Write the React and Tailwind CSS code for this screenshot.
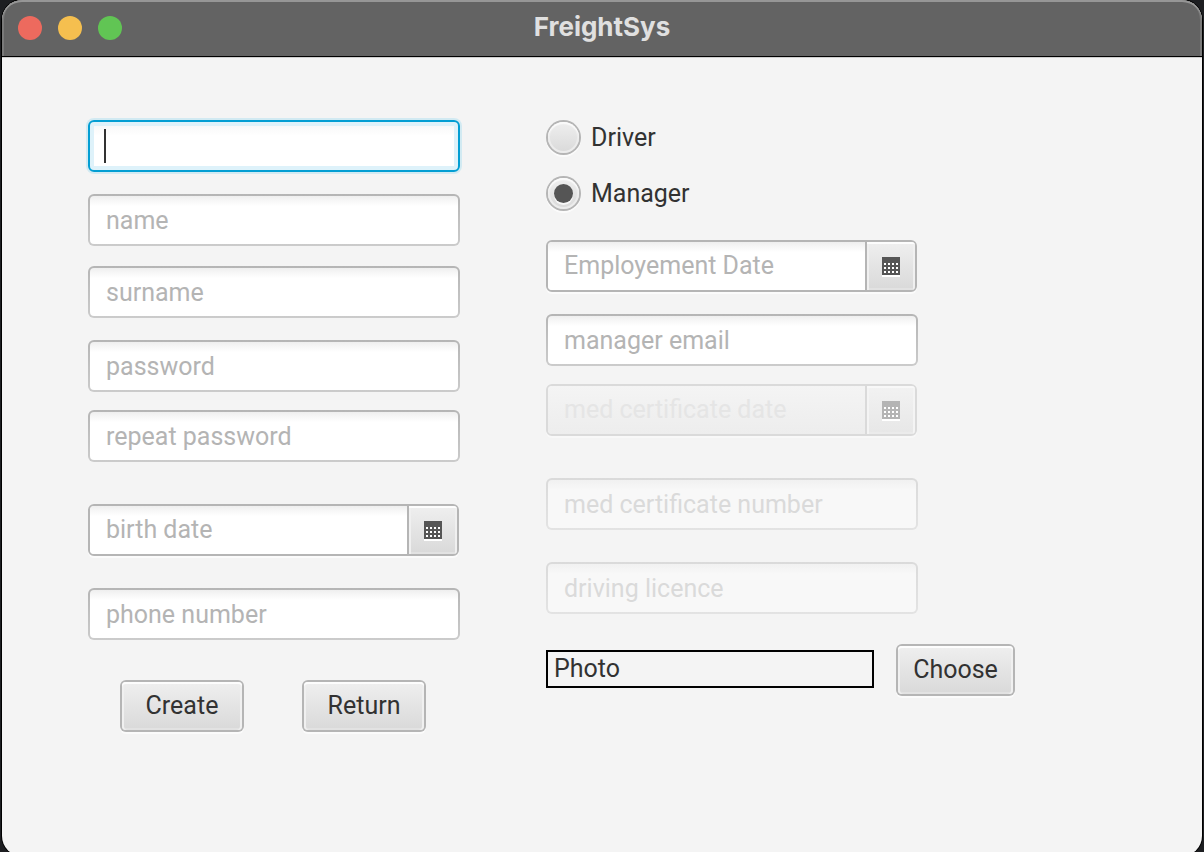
import React from "react";

const raised =
  "border-2 border-transparent rounded-[6px] text-[25px] leading-8 text-[#323232] [background:linear-gradient(#efefef,#d9d9d9)_padding-box,linear-gradient(#b5b5b5,#b5b5b5)_border-box] shadow-[inset_0_2px_0_#fdfdfd,inset_2px_0_0_#f0f0f0,inset_-2px_0_0_#f0f0f0,inset_0_-2px_0_#e2e2e2,0_2px_0_#fbfbfb]";

const field =
  "block h-[52px] w-full rounded-[6px] border-2 border-transparent px-4 text-[25px] text-[#323232] placeholder:text-[#b4b4b4] placeholder:opacity-100 outline-none [background:linear-gradient(#efefef,#ffffff_10px)_padding-box,linear-gradient(#b5b5b5,#cbcbcb)_border-box] disabled:placeholder:text-[#dadada] disabled:[background:linear-gradient(#f1f1f1,#f8f8f8_10px)_padding-box,linear-gradient(#dadada,#e3e3e3)_border-box]";

function TextField({ label, type = "text", disabled }) {
  return (
    <input
      type={type}
      aria-label={label}
      placeholder={label}
      disabled={disabled}
      className={field}
    />
  );
}

function LoginField() {
  return (
    <div className="relative">
      <input
        type="text"
        aria-label="login"
        className="block h-[52px] w-full rounded-[6px] border-2 border-[#039ed3] bg-[linear-gradient(#f6f6f6,#ffffff_14px)] px-4 text-[25px] text-[#323232] caret-transparent shadow-[inset_0_0_0_4px_#def2fa,0_0_0_2px_#d2eaf2] outline-none"
      />
      <span aria-hidden="true" className="pointer-events-none absolute top-[9px] left-4 h-[34px] w-[2px] bg-[#323232]" />
    </div>
  );
}

function CalendarIcon() {
  return (
    <svg width="18" height="20" viewBox="0 0 18 20" shapeRendering="crispEdges" aria-hidden="true" className="mt-[2px]">
      <path fill="#fff" d="M0 2h18v18H0z" />
      <path fill="currentColor" d="M0 0h18v18H0z" />
      <path
        fill="#fff"
        d="M2 6h2v2H2zM6 6h2v2H6zM10 6h2v2h-2zM14 6h2v2h-2zM2 10h2v2H2zM6 10h2v2H6zM10 10h2v2h-2zM14 10h2v2h-2zM2 14h2v2H2zM6 14h2v2H6zM10 14h2v2h-2zM14 14h2v2h-2z"
      />
    </svg>
  );
}

function DateField({ label, disabled }) {
  return (
    <div
      className={
        disabled
          ? "mr-px flex h-[52px] overflow-hidden rounded-[6px] border-2 border-[#dadada] shadow-[0_2px_0_#f8f8f8]"
          : "mr-px flex h-[52px] overflow-hidden rounded-[6px] border-2 border-[#b5b5b5] shadow-[0_2px_0_#fbfbfb]"
      }
    >
      <input
        type="text"
        aria-label={label}
        placeholder={label}
        disabled={disabled}
        className="min-w-0 flex-1 bg-[linear-gradient(#efefef,#ffffff_10px)] px-4 pb-px text-[25px] text-[#323232] outline-none placeholder:text-[#b4b4b4] placeholder:opacity-100 disabled:bg-[linear-gradient(#f4f4f4,#ededed)] disabled:placeholder:text-[#e5e5e5]"
      />
      <button
        type="button"
        aria-label={`Open calendar for ${label}`}
        disabled={disabled}
        className="flex w-[50px] items-center justify-center border-l-2 border-[#b5b5b5] bg-[linear-gradient(#efefef,#d9d9d9)] text-[#555555] shadow-[inset_0_2px_0_#fdfdfd,inset_2px_0_0_#f0f0f0,inset_-2px_0_0_#f0f0f0,inset_0_-2px_0_#e2e2e2] disabled:border-[#dadada] disabled:bg-[linear-gradient(#f2f2f2,#e7e7e7)] disabled:text-[#b4b4b4] disabled:shadow-[inset_0_2px_0_#f8f8f8,inset_2px_0_0_#f4f4f4,inset_-2px_0_0_#f4f4f4,inset_0_-2px_0_#ebebeb]"
      >
        <CalendarIcon />
      </button>
    </div>
  );
}

function Role({ label, defaultChecked }) {
  return (
    <label className="flex h-[35px] items-center gap-[10px] text-[25px] leading-8 text-[#323232]">
      <input
        type="radio"
        name="role"
        defaultChecked={defaultChecked}
        className="grid size-[35px] shrink-0 appearance-none place-content-center rounded-full border-2 border-transparent [background:linear-gradient(#efefef,#d9d9d9)_padding-box,linear-gradient(#b5b5b5,#b5b5b5)_border-box] shadow-[inset_0_2px_1px_#fbfbfb,inset_0_0_0_2px_#ececec,0_2px_0_#fbfbfb] outline-none before:size-[19px] before:rounded-full before:content-[''] checked:before:bg-[#555555] checked:before:shadow-[0_2px_0_#f8f8f8]"
      />
      {label}
    </label>
  );
}

export default function App() {
  return (
    <div className="flex min-h-screen flex-col overflow-hidden bg-[#1d1e21] px-[2px] font-['Roboto','Liberation_Sans',sans-serif]">
      <div className="-mb-1 flex flex-1 flex-col overflow-hidden rounded-[20px] bg-[#f4f4f4] shadow-[0_0_0_1px_#000]">
        <header className="relative flex h-[57px] shrink-0 items-center justify-center rounded-t-[20px] border-b border-black bg-[#636363] pb-[2px] shadow-[inset_0_2px_0_#969696,inset_2px_0_0_#7a7a7a,inset_-2px_0_0_#7a7a7a,0_1px_0_#cfcfcf]">
          <div className="absolute inset-y-0 left-4 flex items-center gap-4">
            <button type="button" aria-label="Close" className="size-6 rounded-full bg-[#ed6a5e]" />
            <button type="button" aria-label="Minimize" className="size-6 rounded-full bg-[#f5bf4f]" />
            <button type="button" aria-label="Zoom" className="size-6 rounded-full bg-[#61c554]" />
          </div>
          <h1 className="font-['Inter','Liberation_Sans',sans-serif] text-[26px] leading-8 font-bold text-[#e0e0e0]">FreightSys</h1>
        </header>

        <form className="flex flex-1 gap-[86px] pt-[63px] pb-20 pl-[86px]" onSubmit={(e) => e.preventDefault()}>
          <section className="w-[372px]">
            <LoginField />
            <div className="mt-[22px]"><TextField label="name" /></div>
            <div className="mt-5"><TextField label="surname" /></div>
            <div className="mt-[22px]"><TextField label="password" type="password" /></div>
            <div className="mt-[18px]"><TextField label="repeat password" type="password" /></div>
            <div className="mt-[42px]"><DateField label="birth date" /></div>
            <div className="mt-8"><TextField label="phone number" type="tel" /></div>
            <div className="mt-10 flex gap-[58px] pl-8">
              <button type="submit" className={`h-[52px] w-[124px] ${raised}`}>Create</button>
              <button type="button" className={`h-[52px] w-[124px] ${raised}`}>Return</button>
            </div>
          </section>

          <section>
            <div className="w-[372px]">
              <Role label="Driver" />
              <div className="mt-[21px]"><Role label="Manager" defaultChecked /></div>
              <div className="mt-[29px]"><DateField label="Employement Date" /></div>
              <div className="mt-[22px]"><TextField label="manager email" type="email" /></div>
              <div className="mt-[18px]"><DateField label="med certificate date" disabled /></div>
              <div className="mt-[42px]"><TextField label="med certificate number" disabled /></div>
              <div className="mt-8"><TextField label="driving licence" disabled /></div>
            </div>
            <div className="mt-[30px] flex gap-[22px]">
              <div className="mt-[6px] flex h-[38px] w-[328px] items-center border-2 border-black px-[6px] text-[25px] leading-8 text-[#323232]">Photo</div>
              <button type="button" className={`h-[52px] w-[119px] ${raised}`}>Choose</button>
            </div>
          </section>
        </form>
      </div>
    </div>
  );
}
